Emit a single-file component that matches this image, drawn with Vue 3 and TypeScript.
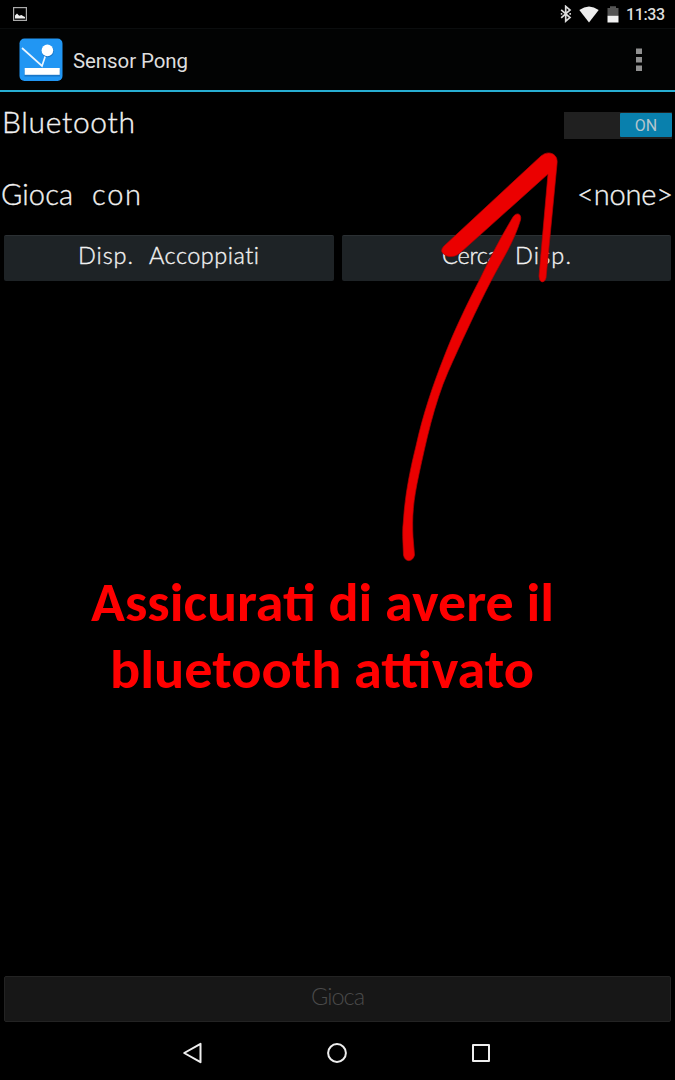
<script setup lang="ts">
interface Word {
  text: string
  x: number
  length: number
}
interface Label {
  words: Word[]
  size: number
  width: number
  height: number
  baseline: number
}

const bluetooth: Label = { words: [{ text: 'Bluetooth', x: 0, length: 133 }], size: 30, width: 133, height: 46, baseline: 30 }
const playWith: Label = {
  words: [{ text: 'Gioca', x: -1, length: 72 }, { text: 'con', x: 90, length: 49 }],
  size: 29, width: 138, height: 46, baseline: 30,
}
const nobody: Label = { words: [{ text: '<none>', x: 0, length: 96 }], size: 29, width: 95, height: 46, baseline: 30 }
const deviceButtons: Label[] = [
  { words: [{ text: 'Disp.', x: 0, length: 55 }, { text: 'Accoppiati', x: 71, length: 110 }], size: 23.5, width: 181, height: 45, baseline: 28 },
  { words: [{ text: 'Cerca', x: 0, length: 57 }, { text: 'Disp.', x: 73, length: 56 }], size: 23.5, width: 129, height: 45, baseline: 28 },
]
const play: Label = { words: [{ text: 'Gioca', x: 0, length: 54 }], size: 23.5, width: 54, height: 45, baseline: 28 }
</script>

<template>
  <main class="screen">
    <header class="status">
      <svg class="shot" width="14" height="14" viewBox="0 0 14 14">
        <rect x=".6" y=".6" width="12.8" height="12.8" fill="none" stroke="#aaa" stroke-width="1.2" />
        <path d="M2 11.5V8.5L4 6.5L6.2 8.8L8.5 8L10 9L12 10V11.5Z" fill="#eee" />
      </svg>
      <div class="indicators">
        <svg width="12" height="18" viewBox="0 0 12 18">
          <path d="M1.2 4.8L10 12.6L5.7 16.2V1.4L10 5L1.2 12.8" fill="none" stroke="#ddd" stroke-width="1.7" />
          <path d="M.8 8H2.3V9.7H.8ZM9.4 8H11V9.7H9.4Z" fill="#ccc" />
        </svg>
        <svg class="wifi" width="20" height="17" viewBox="0 0 20 17">
          <path d="M.3 4Q10-3.2 19.7 4L10 16.5Z" fill="#eee" />
        </svg>
        <svg class="battery" width="12" height="17" viewBox="0 0 12 17">
          <path d="M.5 2H3V.3H9V2H11.5V10H.5Z" fill="#555" />
          <path d="M.5 9.8H11.5V16.5H.5Z" fill="#f2f2f2" />
        </svg>
        <svg class="clock" width="40" height="20"><text x="0" y="16" textLength="39">11:33</text></svg>
      </div>
    </header>

    <header class="bar">
      <svg class="logo" width="44" height="44" viewBox="0 0 44 44">
        <rect x=".5" y=".5" width="43" height="42.5" rx="5" fill="#2196f3" />
        <path d="M5.5 32H41V38.5H5.5Z" fill="#1976c8" />
        <path d="M3 10L23 28L28 13" fill="none" stroke="#eaf5ff" stroke-width="1.7" />
        <circle cx="28.8" cy="13.3" r="6" fill="#1976c8" />
        <circle cx="28.4" cy="12.4" r="5.8" fill="#fff" />
        <rect x="5.7" y="30" width="35" height="6.8" fill="#fff" />
      </svg>
      <svg class="title" width="120" height="30"><text x="0" y="22.500" textLength="115">Sensor Pong</text></svg>
      <svg class="more" width="6" height="24" viewBox="0 0 6 24">
        <path d="M0 .5H6V6H0ZM0 9H6V14.5H0ZM0 17.5H6V23H0Z" fill="#909090" />
      </svg>
    </header>

    <section class="row first">
      <svg class="hand" :width="bluetooth.width" :height="bluetooth.height">
        <text v-for="w in bluetooth.words" :key="w.x" :x="w.x" :y="bluetooth.baseline" :font-size="bluetooth.size" :textLength="w.length">{{ w.text }}</text>
      </svg>
      <div class="switch"><span class="thumb">ON</span></div>
    </section>
    <section class="row second">
      <svg class="hand" :width="playWith.width" :height="playWith.height">
        <text v-for="w in playWith.words" :key="w.x" :x="w.x" :y="playWith.baseline" :font-size="playWith.size" :textLength="w.length">{{ w.text }}</text>
      </svg>
      <svg class="hand" :width="nobody.width" :height="nobody.height">
        <text v-for="w in nobody.words" :key="w.x" :x="w.x" :y="nobody.baseline" :font-size="nobody.size" :textLength="w.length">{{ w.text }}</text>
      </svg>
    </section>

    <section class="buttons">
      <button v-for="(b, i) in deviceButtons" :key="i" type="button">
        <svg class="hand" :width="b.width" :height="b.height">
          <text v-for="w in b.words" :key="w.x" :x="w.x" :y="b.baseline" :font-size="b.size" :textLength="w.length">{{ w.text }}</text>
        </svg>
      </button>
    </section>

    <section class="bottom">
      <button class="off" type="button" disabled>
        <svg class="hand" :width="play.width" :height="play.height">
          <text v-for="w in play.words" :key="w.x" :x="w.x" :y="play.baseline" :font-size="play.size" :textLength="w.length">{{ w.text }}</text>
        </svg>
      </button>
    </section>

    <nav class="nav">
      <svg width="22" height="24" viewBox="0 0 22 24"><path d="M18.5 2.8V21.2L2.2 12Z" /></svg>
      <svg width="22" height="24" viewBox="0 0 22 24"><circle cx="11" cy="12" r="8.9" /></svg>
      <svg width="22" height="24" viewBox="0 0 22 24"><rect x="3" y="4" width="16" height="16" /></svg>
    </nav>

    <svg class="guide" width="675" height="1080" viewBox="0 0 675 1080">
      <g class="arrow">
        <path d="M444 246L541 156Q547 151 553 154Q558 157 557 164L546 278Q545 282 542 282Q539 281 539 276L548 174L460 253Q454 258 447 256Q438 252 444 246Z" />
        <path d="M513 217C516 212 522 213 520.500 220C514 242 503 258 490.500 282C477 308 460 345 448 372C434 404 426 442 419 474C413 502 412 516 413 537L414.500 555C413 562 405 563 403.500 555C403 542 402 531 403.500 520C405 495 410 470 416 446C423 414 433 385 444 357C454 331 467 304 480 279C491 256 501 237 513 217Z" />
      </g>
      <g class="caption">
        <text x="91" y="621" textLength="463" lengthAdjust="spacingAndGlyphs">Assicurati di avere il</text>
        <text x="110" y="688" textLength="424" lengthAdjust="spacingAndGlyphs">bluetooth attivato</text>
      </g>
    </svg>
  </main>
</template>

<style>
html, body { background: #000; }
</style>

<style scoped>
.screen { position: relative; width: 675px; height: 1080px; overflow: hidden; background: #000; color: #e8e8e8; font-family: Roboto, sans-serif; display: flex; flex-direction: column; }
svg { display: block; flex: none; }
.status { height: 28px; display: flex; justify-content: space-between; box-sizing: border-box; padding: 0 9px 0 13px; align-items: center; }
.indicators { display: flex; align-items: center; }
.wifi { margin-left: 7px; }
.battery { margin-left: 8px; }
.clock { margin-left: 7px; }
.clock text { font-size: 16px; font-weight: 500; fill: #ddd; }
.bar { height: 64px; box-sizing: border-box; border-top: 1px solid #0b0d0e; border-bottom: 2px solid #27aed2; background: #020303; display: flex; align-items: center; padding: 0 33px 0 19px; }
.title { margin-left: 10px; }
.title text { font-size: 20.5px; fill: #dedede; }
.more { margin-left: auto; }
.row { height: 72px; display: flex; justify-content: space-between; box-sizing: border-box; padding: 11px 3px 0 2px; }
.hand { overflow: visible; }
.hand text { font-family: Lato, sans-serif; font-weight: 300; font-variant-ligatures: none; fill: #f2f2f2; stroke: #f2f2f2; stroke-width: .35; }
.switch { width: 108px; height: 27px; margin-top: 9px; box-sizing: border-box; background: #202020; display: flex; justify-content: flex-end; padding: 1px 0 2px; }
.thumb { width: 52px; background: #0980ad; color: #b4c6ce; font-size: 16px; line-height: 26px; text-align: center; border-radius: 1px; }
.buttons { display: flex; gap: 8px; padding: 0 4px; margin-top: -1px; }
button { flex: 1; height: 46px; border: 0; border-top: 1px solid #2b3033; border-radius: 2px; background: #1e2326; padding: 0; display: flex; justify-content: center; }
.bottom { margin-top: auto; padding: 0 4px; display: flex; }
.off { background: #171717; border: 1px solid #232323; }
.off .hand text { fill: #4a4a4a; stroke: none; }
.nav { height: 58px; box-sizing: border-box; padding-top: 3px; padding-right: 1px; display: flex; justify-content: center; align-items: center; gap: 122px; }
.nav path, .nav circle, .nav rect { fill: none; stroke: #eee; stroke-width: 2; stroke-linejoin: round; }
.guide { position: absolute; left: 0; top: 0; }
.arrow { fill: #eb0000; stroke: #b80000; stroke-width: .7; }
.caption text { font-family: Carlito, Lato, sans-serif; font-weight: 700; font-size: 54.5px; fill: #f00; }
</style>
